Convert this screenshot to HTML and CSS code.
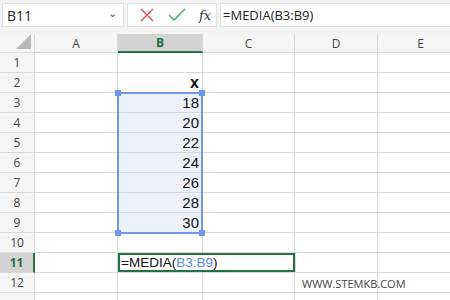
FILE: index.html
```html
<!DOCTYPE html>
<html lang="it">
<head>
    <meta charset="UTF-8" />
    <title>MEDIA</title>
    <link rel="stylesheet" href="styles.css">
</head>
<body>
    <div class="barra">
        <div class="nome">B11<span class="freccia">&#8964;</span></div>
        <div class="comandi">
            <svg width="16" height="16" viewBox="0 0 16 16"><path d="M2 2 L14 14 M14 2 L2 14" stroke="#e8474a" stroke-width="1.3" fill="none"/></svg>
            <svg width="18" height="16" viewBox="0 0 18 16"><path d="M1 8 L6 13 L17 2" stroke="#2fa84f" stroke-width="1.3" fill="none"/></svg>
            <span class="fx">fx</span>
        </div>
        <div class="formula">=MEDIA(B3:B9)</div>
    </div>

    <div class="foglio">
        <div class="angolo"><span class="triangolo"></span></div>
        <div class="col">A</div>
        <div class="col attiva">B</div>
        <div class="col">C</div>
        <div class="col">D</div>
        <div class="col">E</div>

        <div class="riga">1</div><div class="cella"></div><div class="cella"></div><div class="cella"></div><div class="cella"></div><div class="cella"></div>
        <div class="riga">2</div><div class="cella"></div><div class="cella num titolo">x</div><div class="cella"></div><div class="cella"></div><div class="cella"></div>
        <div class="riga">3</div><div class="cella"></div><div class="cella num sel">18</div><div class="cella"></div><div class="cella"></div><div class="cella"></div>
        <div class="riga">4</div><div class="cella"></div><div class="cella num sel">20</div><div class="cella"></div><div class="cella"></div><div class="cella"></div>
        <div class="riga">5</div><div class="cella"></div><div class="cella num sel">22</div><div class="cella"></div><div class="cella"></div><div class="cella"></div>
        <div class="riga">6</div><div class="cella"></div><div class="cella num sel">24</div><div class="cella"></div><div class="cella"></div><div class="cella"></div>
        <div class="riga">7</div><div class="cella"></div><div class="cella num sel">26</div><div class="cella"></div><div class="cella"></div><div class="cella"></div>
        <div class="riga">8</div><div class="cella"></div><div class="cella num sel">28</div><div class="cella"></div><div class="cella"></div><div class="cella"></div>
        <div class="riga">9</div><div class="cella"></div><div class="cella num sel">30</div><div class="cella"></div><div class="cella"></div><div class="cella"></div>
        <div class="riga">10</div><div class="cella"></div><div class="cella"></div><div class="cella"></div><div class="cella"></div><div class="cella"></div>
        <div class="riga attiva">11</div><div class="cella"></div><div class="cella modifica">=MEDIA(<span class="rif">B3:B9</span>)</div><div class="cella"></div><div class="cella"></div>
        <div class="riga">12</div><div class="cella"></div><div class="cella"></div><div class="cella"></div><div class="cella sito">WWW.STEMKB.COM</div><div class="cella"></div>
        <div class="riga"></div><div class="cella"></div><div class="cella"></div><div class="cella"></div><div class="cella"></div><div class="cella"></div>

        <div class="selezione">
            <span class="maniglia tl"></span>
            <span class="maniglia tr"></span>
            <span class="maniglia bl"></span>
            <span class="maniglia br"></span>
        </div>
    </div>
</body>
</html>
```

FILE: styles.css
```css
* {
    box-sizing: border-box;
}
body {
    margin: 0;
    width: 450px;
    height: 300px;
    overflow: hidden;
    background: #ffffff;
    font-family: "Liberation Sans", Arial, sans-serif;
}
.barra {
    display: flex;
    gap: 3px;
    height: 34px;
    padding: 3px 0 7px 2px;
    background: #f3f3f3;
}
.nome {
    display: flex;
    align-items: center;
    justify-content: space-between;
    width: 122px;
    padding: 0 6px 0 4px;
    background: #ffffff;
    border: 1px solid #e1e1e1;
    font-family: "Open Sans", sans-serif;
    font-size: 14px;
    color: #222;
}
.freccia {
    font-size: 11px;
    color: #555;
    margin-top: -6px;
}
.comandi {
    display: flex;
    align-items: center;
    gap: 13px;
    width: 90px;
    padding-left: 11px;
    background: #ffffff;
    border: 1px solid #e1e1e1;
}
.fx {
    font-family: "DejaVu Serif", serif;
    font-style: italic;
    font-size: 13px;
    color: #333;
}
.formula {
    flex: 1;
    display: flex;
    align-items: center;
    padding-left: 2px;
    background: #ffffff;
    border: 1px solid #e1e1e1;
    border-right: none;
    font-family: "Open Sans", sans-serif;
    font-size: 13px;
    color: #222;
}
.foglio {
    position: relative;
    display: grid;
    grid-template-columns: 35px 83px 85px 92px 83px 86px;
    grid-template-rows: 19px;
    grid-auto-rows: 20px;
}
.angolo,
.col,
.riga {
    background: #f5f5f5;
    font-family: "Open Sans", sans-serif;
    font-size: 12px;
    color: #444;
    display: flex;
    align-items: center;
    justify-content: center;
    border-right: 1px solid #d9d9d9;
    border-bottom: 1px solid #d9d9d9;
}
.angolo {
    position: relative;
}
.triangolo {
    position: absolute;
    right: 3px;
    bottom: 3px;
    width: 0;
    height: 0;
    border-left: 15px solid transparent;
    border-bottom: 15px solid #b8b8b8;
}
.col.attiva {
    background: #d3d3d3;
    color: #1e6e42;
    font-weight: bold;
    border-bottom: 2px solid #217346;
}
.riga.attiva {
    background: #d3d3d3;
    color: #1e6e42;
    font-weight: bold;
    border-right: 2px solid #217346;
}
.cella {
    border-right: 1px solid #d9d9d9;
    border-bottom: 1px solid #d9d9d9;
    font-size: 15px;
    color: #111;
    white-space: nowrap;
}
.num {
    text-align: right;
    padding: 1px 3px 0 0;
}
.titolo {
    font-weight: bold;
    font-size: 16px;
}
.sel {
    background: #edf1fc;
}
.modifica {
    grid-column: span 2;
    padding: 2px 0 0 3px;
    margin-right: -1px;
    font-size: 13.5px;
    box-shadow: inset 0 0 0 2px #217346;
}
.rif {
    color: #5a8ae4;
}
.sito {
    font-family: "Open Sans", sans-serif;
    font-size: 11px;
    color: #444;
    padding: 3px 0 0 7px;
    overflow: visible;
}
.selezione {
    position: absolute;
    left: 117px;
    top: 58px;
    width: 86px;
    height: 142px;
    border: 2px solid #6e97e8;
}
.maniglia {
    position: absolute;
    width: 6px;
    height: 6px;
    background: #6e97e8;
}
.tl { left: -4px; top: -4px; }
.tr { right: -4px; top: -4px; }
.bl { left: -4px; bottom: -4px; }
.br { right: -4px; bottom: -4px; }
```
